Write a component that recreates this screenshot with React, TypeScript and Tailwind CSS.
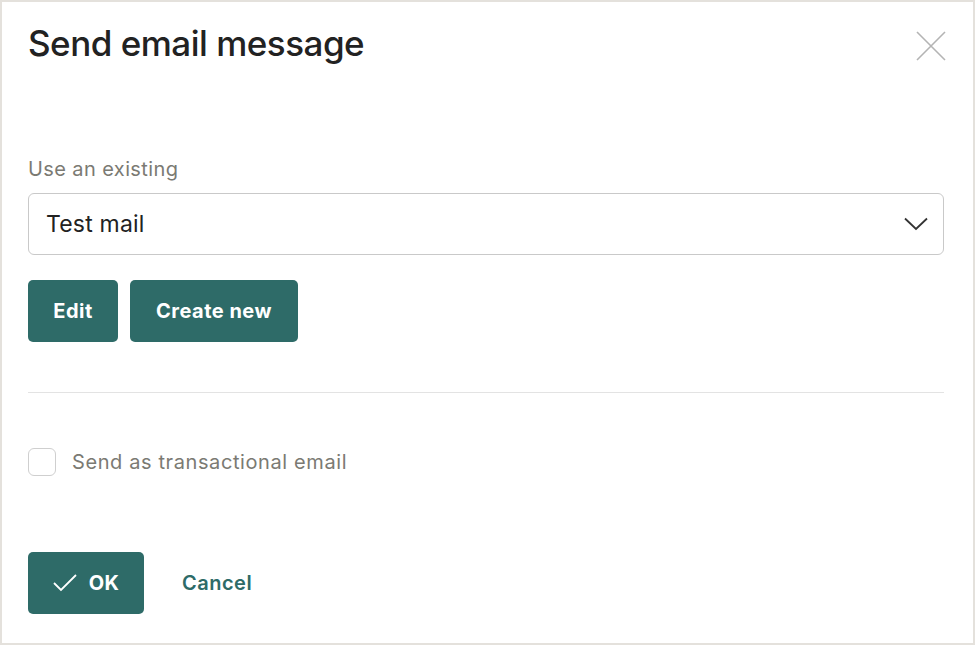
import { useState } from 'react';

export default function App() {
  const [transactional, setTransactional] = useState(false);

  return (
    <div className="w-[976px] h-[646px] bg-white" style={{ fontFamily: 'Inter, "Noto Sans", sans-serif' }}>
      <div className="w-[975px] h-[645px] border-2 border-[#e4e1dc] bg-white px-[26px] flex flex-col">
        <div className="flex items-start justify-between pt-[17px]">
          <h1 className="text-[35px] leading-[48px] font-medium tracking-[-0.5px] text-[#222]">
            Send email message
          </h1>
          <button className="mt-[12px] mr-[1px] text-[#b4b4b4]">
            <svg width="30" height="30" viewBox="0 0 30 30" fill="none" stroke="currentColor" strokeWidth="1.6">
              <path d="M1 1L29 29M29 1L1 29" />
            </svg>
          </button>
        </div>

        <label className="mt-[90px] text-[20px] leading-[24px] tracking-[0.4px] text-[#7b7a73]">Use an existing</label>
        <div className="mt-[12px] h-[62px] w-[916px] border border-[#c9c9c9] rounded-[6px] flex items-center justify-between pl-[17px] pr-[15px]">
          <span className="text-[23px] tracking-[0.2px] text-[#222]">Test mail</span>
          <svg width="24" height="14" viewBox="0 0 24 14" fill="none" stroke="#333" strokeWidth="1.8">
            <path d="M1 1.5L12 12L23 1.5" />
          </svg>
        </div>

        <div className="mt-[25px] flex gap-[12px]">
          <button className="h-[62px] w-[90px] rounded-[5px] bg-[#2e6b68] text-white text-[20px] font-bold tracking-[0.5px]">
            Edit
          </button>
          <button className="h-[62px] w-[168px] rounded-[5px] bg-[#2e6b68] text-white text-[20px] font-bold tracking-[0.5px]">
            Create new
          </button>
        </div>

        <div className="mt-[50px] h-px w-[916px] bg-[#e3e3e3]" />

        <label className="mt-[54px] flex items-center gap-[16px] cursor-pointer">
          <span
            onClick={() => setTransactional(!transactional)}
            className="w-[28px] h-[28px] rounded-[6px] border border-[#cfcfcf] bg-white"
          />
          <span className="text-[20px] tracking-[0.6px] text-[#7b7a73]">Send as transactional email</span>
        </label>

        <div className="mt-[75px] flex items-center gap-[38px]">
          <button className="h-[62px] w-[116px] rounded-[5px] bg-[#2e6b68] text-white text-[20px] font-bold tracking-[0.3px] flex items-center justify-center gap-[12px]">
            <svg width="24" height="18" viewBox="0 0 24 18" fill="none" stroke="white" strokeWidth="1.8">
              <path d="M1 9L8 16L23 1" />
            </svg>
            OK
          </button>
          <button className="text-[20px] font-semibold tracking-[0.5px] text-[#2e6b68]">Cancel</button>
        </div>
      </div>
    </div>
  );
}
